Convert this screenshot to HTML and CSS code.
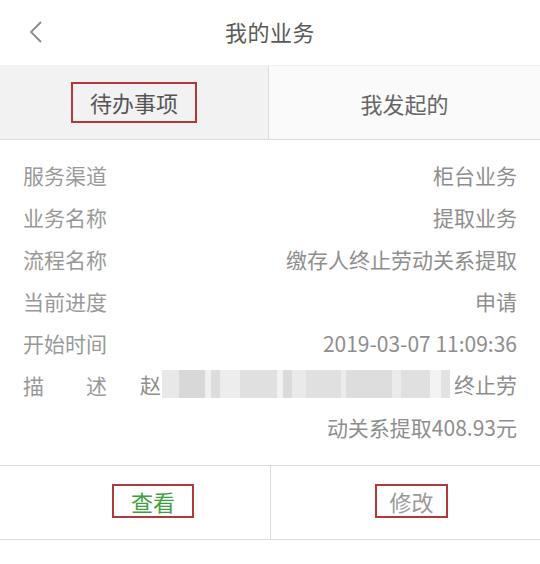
FILE: index.html
```html
<!DOCTYPE html>
<html lang="zh-CN">
<head>
<meta charset="utf-8">
<link rel="stylesheet" href="styles.css">
</head>
<body>
<div class="page">
  <header class="topbar">
    <div class="back">
      <svg width="16" height="24" viewBox="0 0 16 24"><path d="M13 2 L3 12 L13 22" fill="none" stroke="#8a8a8a" stroke-width="1.8"/></svg>
    </div>
    <div class="title">我的业务</div>
    <div></div>
  </header>
  <nav class="tabs">
    <div class="tab tab-active"><span class="mark mark-tab">待办事项</span></div>
    <div class="tab tab-idle">我发起的</div>
  </nav>
  <section class="details">
    <div class="row"><span class="label">服务渠道</span><span class="value">柜台业务</span></div>
    <div class="row"><span class="label">业务名称</span><span class="value">提取业务</span></div>
    <div class="row"><span class="label">流程名称</span><span class="value">缴存人终止劳动关系提取</span></div>
    <div class="row"><span class="label">当前进度</span><span class="value">申请</span></div>
    <div class="row"><span class="label">开始时间</span><span class="value">2019-03-07 11:09:36</span></div>
    <div class="row row-desc">
      <span class="label label-spread"><span>描</span><span>述</span></span>
      <div class="desc">
        <div class="desc-line"><span>赵</span><span class="blur"></span><span>终止劳</span></div>
        <div class="desc-line desc-end">动关系提取408.93元</div>
      </div>
    </div>
  </section>
  <footer class="actions">
    <div class="action action-left"><span class="mark mark-green">查看</span></div>
    <div class="action action-right"><span class="mark mark-gray">修改</span></div>
  </footer>
</div>
</body>
</html>
```

FILE: styles.css
```css
* { box-sizing: border-box; }
html, body { margin: 0; padding: 0; background: #ffffff; }
body {
  font-family: "Noto Sans CJK SC", "Noto Sans", sans-serif;
  width: 540px;
  height: 564px;
  overflow: hidden;
}
.page { width: 540px; }

.topbar {
  height: 65px;
  display: grid;
  grid-template-columns: 1fr auto 1fr;
  align-items: center;
  background: #fff;
}
.back { padding-left: 28px; padding-bottom: 2px; display: flex; align-items: center; }
.title { font-size: 22px; color: #5a5a5a; letter-spacing: 0.5px; padding-bottom: 4px; }

.tabs {
  height: 75px;
  display: flex;
  border-bottom: 1px solid #dcdcdc;
  border-top: 1px solid #f0f0f0;
}
.tab {
  display: flex;
  align-items: center;
  justify-content: center;
  font-size: 22px;
  color: #666;
}
.tab-active { width: 269px; background: #f2f2f2; border-right: 1px solid #dcdcdc; }
.tab-idle { flex: 1; background: #fafafa; }

.mark {
  border: 2px solid #b2393b;
  display: inline-block;
  line-height: 1;
}
.mark-tab { padding: 7px 17px 8px; font-size: 22px; color: #555; }

.details { padding: 14px 23px 15px 23px; }
.row {
  display: flex;
  justify-content: space-between;
  align-items: center;
  height: 42px;
  font-size: 21px;
}
.label { color: #999; font-size: 21px; }
.value { color: #8e8e8e; font-size: 21px; }
.row-desc { height: auto; align-items: flex-start; }
.label-spread { width: 84px; display: flex; justify-content: space-between; line-height: 42px; }
.desc { width: 377px; font-size: 21px; color: #8e8e8e; }
.desc-line { display: flex; align-items: center; height: 40px; }
.desc-end { justify-content: flex-end; height: 46px; }
.blur {
  flex: 1;
  height: 28px;
  margin: 0 4px 0 1px;
  background:
    linear-gradient(90deg,
      #e8e8e8 0 6%, #d8d8d8 6% 15%, #f0f0f0 15% 17%, #dcdcdc 17% 20%, #ededed 20% 27%,
      #e0e0e0 27% 40%, #f2f2f2 40% 42%, #dadada 42% 45%, #eaeaea 45% 50%, #e0e0e0 50% 62%,
      #ececec 62% 64%, #dddddd 64% 80%, #ebebeb 80% 83%, #e0e0e0 83% 93%, #f3f3f3 93% 97%, #e2e2e2 97% 100%);
}

.actions {
  display: flex;
  height: 75px;
  border-top: 1px solid #dcdcdc;
  border-bottom: 1px solid #dcdcdc;
}
.action { display: flex; align-items: center; justify-content: center; font-size: 22px; padding-bottom: 4px; }
.action-left { width: 271px; border-right: 1px solid #dcdcdc; padding-left: 36px; }
.action-right { flex: 1; padding-left: 12px; }
.mark-green { color: #3ea03e; padding: 4px 17px 4px; }
.mark-gray { color: #999; padding: 4px 12px 4px; }
```
